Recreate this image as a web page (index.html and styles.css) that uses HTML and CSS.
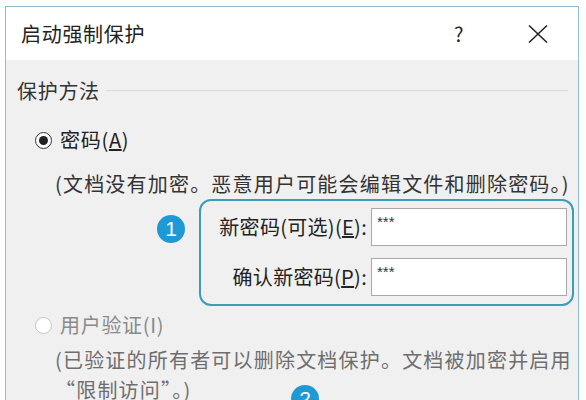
FILE: index.html
```html
<!DOCTYPE html>
<html lang="zh-CN">
<head>
    <meta charset="UTF-8">
    <title>启动强制保护</title>
    <link rel="stylesheet" href="styles.css">
</head>
<body>
    <div class="dialog">
        <div class="titlebar">
            <span class="title">启动强制保护</span>
            <span class="help">?</span>
            <span class="close">
                <svg width="20" height="18" viewBox="0 0 20 18">
                    <path d="M1 0.5 L19 17.5 M19 0.5 L1 17.5" stroke="#222" stroke-width="1.5" fill="none"/>
                </svg>
            </span>
        </div>
        <div class="content">
            <div class="group-head">
                <span>保护方法</span>
                <span class="group-line"></span>
            </div>

            <div class="option">
                <span class="radio checked"></span>
                <span>密码(<u>A</u>)</span>
            </div>
            <div class="desc">(文档没有加密。恶意用户可能会编辑文件和删除密码。)</div>

            <div class="fields-row">
                <span class="badge">1</span>
                <div class="fields">
                    <label class="field-label">新密码(可选)(<u>E</u>):</label>
                    <div class="field-input">***</div>
                    <label class="field-label">确认新密码(<u>P</u>):</label>
                    <div class="field-input">***</div>
                </div>
            </div>

            <div class="option disabled">
                <span class="radio"></span>
                <span>用户验证(I)</span>
            </div>
            <div class="desc disabled-desc">(已验证的所有者可以删除文档保护。文档被加密并启用“限制访问”。)</div>

            <span class="badge badge-two">2</span>
        </div>
    </div>
</body>
</html>
```

FILE: styles.css
```css
body {
    margin: 0;
    padding: 0;
    background-color: #ffffff;
    font-family: "Noto Sans CJK SC", "Noto Sans", sans-serif;
    color: #222;
    overflow: hidden;
}

.dialog {
    margin: 6px 0 0 5px;
    width: 572px;
    height: 400px;
    border: 1px solid #8fbfcc;
    border-bottom: none;
    overflow: hidden;
}

.titlebar {
    height: 53px;
    display: flex;
    align-items: center;
    padding-left: 15px;
    background-color: #ffffff;
    font-size: 20px;
    letter-spacing: 0.7px;
}
.title {
    flex: 1;
}
.help {
    width: 12px;
    margin-right: 62px;
    color: #222;
}
.close {
    display: flex;
    margin-right: 30px;
}

.content {
    position: relative;
    height: 400px;
    background-color: #f0f0f0;
    padding: 19px 4px 0 11px;
    font-size: 20px;
    line-height: 24px;
    letter-spacing: 0.7px;
}

.group-head {
    display: flex;
    align-items: center;
    gap: 6px;
    padding-right: 6px;
    color: #333;
}
.group-line {
    flex: 1;
    height: 1px;
    margin-top: -2px;
    background-color: #dcdcdc;
}

.option {
    display: flex;
    align-items: center;
    gap: 8px;
    margin: 25px 0 0 18px;
    color: #222;
}
.radio {
    width: 15px;
    height: 15px;
    border: 1.5px solid #333;
    border-radius: 50%;
    background-color: #fff;
    display: flex;
    align-items: center;
    justify-content: center;
}
.radio.checked::after {
    content: "";
    width: 9px;
    height: 9px;
    border-radius: 50%;
    background-color: #222;
}
.option.disabled {
    margin-top: 7px;
    color: #8a8a8a;
}
.option.disabled .radio {
    border-color: #c4c4c4;
}

.desc {
    margin: 20px 0 0 38px;
    color: #333;
    letter-spacing: 1.2px;
}
.disabled-desc {
    margin-top: 8px;
    line-height: 30px;
    color: #6e6e6e;
}

.fields-row {
    display: flex;
    align-items: flex-start;
    margin-top: 3px;
}
.badge {
    width: 28px;
    height: 28px;
    border-radius: 50%;
    background-color: #1d9ad6;
    color: #fff;
    font-family: "Liberation Sans", Arial, sans-serif;
    font-size: 21px;
    line-height: 28px;
    letter-spacing: 0;
    text-align: center;
    margin: 16px 14px 0 140px;
}
.badge-two {
    position: absolute;
    left: 285px;
    top: 325px;
    margin: 0;
}

.fields {
    flex: 1;
    display: grid;
    grid-template-columns: auto 196px;
    column-gap: 4px;
    row-gap: 12px;
    align-items: center;
    justify-items: end;
    padding: 7px 5px 8px 10px;
    border: 2px solid #3b9db6;
    border-radius: 12px;
    letter-spacing: 0.3px;
}
.field-label {
    color: #222;
}
.field-input {
    justify-self: stretch;
    height: 38px;
    box-sizing: border-box;
    border: 1px solid #a8a8a8;
    background-color: #fff;
    font-family: "Liberation Sans", Arial, sans-serif;
    font-size: 15px;
    line-height: 20px;
    letter-spacing: 0;
    padding: 3px 5px;
    color: #333;
}
```
